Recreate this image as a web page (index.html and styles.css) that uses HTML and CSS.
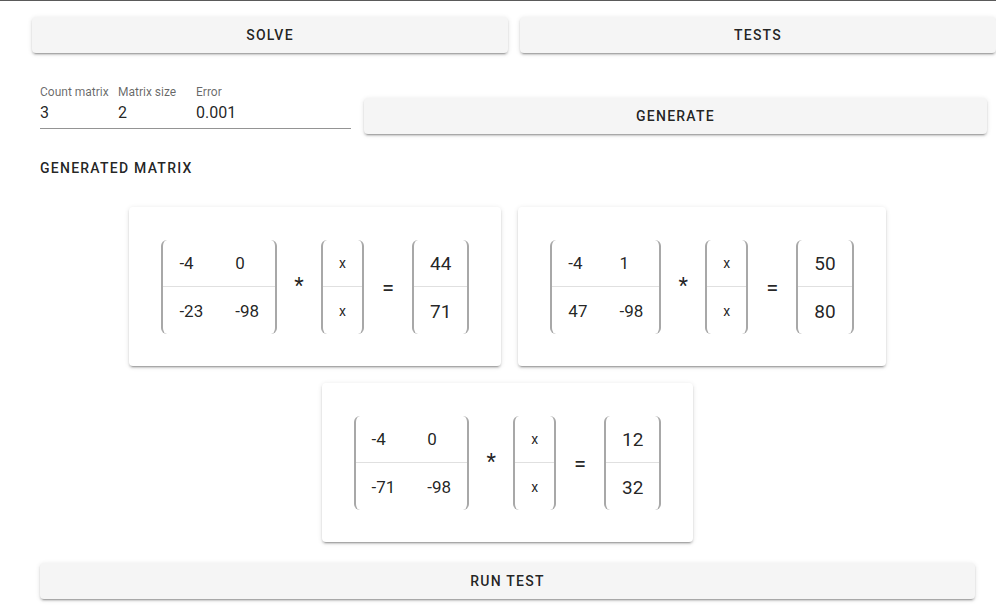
FILE: index.html
```html
<!DOCTYPE html>
<html>
<head>
<meta charset="utf-8">
<link rel="stylesheet" href="styles.css">
</head>
<body>
<div class="app">
  <div class="top-actions">
    <button class="btn">SOLVE</button>
    <button class="btn">TESTS</button>
  </div>

  <div class="controls">
    <div class="fields">
      <div class="field f-count">
        <span class="f-label">Count matrix</span>
        <span class="f-value">3</span>
      </div>
      <div class="field f-size">
        <span class="f-label">Matrix size</span>
        <span class="f-value">2</span>
      </div>
      <div class="field f-error">
        <span class="f-label">Error</span>
        <span class="f-value">0.001</span>
      </div>
    </div>
    <button class="btn btn-generate">GENERATE</button>
  </div>

  <div class="section-title">GENERATED MATRIX</div>

  <div class="cards">
    <div class="card">
      <table class="mx">
        <tr><td>-4</td><td>0</td></tr>
        <tr><td>-23</td><td>-98</td></tr>
      </table>
      <span class="op op-mul">*</span>
      <table class="mx vec">
        <tr><td>x</td></tr>
        <tr><td>x</td></tr>
      </table>
      <span class="op op-eq">=</span>
      <table class="mx res">
        <tr><td>44</td></tr>
        <tr><td>71</td></tr>
      </table>
    </div>

    <div class="card">
      <table class="mx">
        <tr><td>-4</td><td>1</td></tr>
        <tr><td>47</td><td>-98</td></tr>
      </table>
      <span class="op op-mul">*</span>
      <table class="mx vec">
        <tr><td>x</td></tr>
        <tr><td>x</td></tr>
      </table>
      <span class="op op-eq">=</span>
      <table class="mx res">
        <tr><td>50</td></tr>
        <tr><td>80</td></tr>
      </table>
    </div>

    <div class="card">
      <table class="mx">
        <tr><td>-4</td><td>0</td></tr>
        <tr><td>-71</td><td>-98</td></tr>
      </table>
      <span class="op op-mul">*</span>
      <table class="mx vec">
        <tr><td>x</td></tr>
        <tr><td>x</td></tr>
      </table>
      <span class="op op-eq">=</span>
      <table class="mx res">
        <tr><td>12</td></tr>
        <tr><td>32</td></tr>
      </table>
    </div>
  </div>

  <div class="bottom-actions">
    <button class="btn btn-run">RUN TEST</button>
  </div>
</div>
</body>
</html>
```

FILE: styles.css
```css
* {
  box-sizing: border-box;
}

html, body {
  margin: 0;
  padding: 0;
  background: #ffffff;
}

body {
  font-family: Roboto, "Liberation Sans", sans-serif;
  color: rgba(0, 0, 0, 0.87);
  border-top: 1px solid #5a5a5a;
  width: 996px;
  height: 609px;
  overflow: hidden;
}

.btn {
  display: flex;
  align-items: center;
  justify-content: center;
  height: 36px;
  padding: 0 16px;
  border: none;
  border-radius: 4px;
  background: #f5f5f5;
  color: rgba(0, 0, 0, 0.87);
  font-family: Roboto, "Liberation Sans", sans-serif;
  font-size: 14px;
  font-weight: 500;
  letter-spacing: 1.25px;
  box-shadow: 0 3px 1px -2px rgba(0, 0, 0, 0.2),
              0 2px 2px 0 rgba(0, 0, 0, 0.14),
              0 1px 5px 0 rgba(0, 0, 0, 0.12);
}

.top-actions {
  display: grid;
  grid-template-columns: 476px 476px;
  column-gap: 12px;
  padding: 16px 0 0 32px;
}

.controls {
  display: flex;
  align-items: flex-start;
  margin-top: 31px;
  padding-left: 40px;
}

.fields {
  display: flex;
  width: 311px;
  padding-bottom: 3px;
  border-bottom: 1px solid rgba(0, 0, 0, 0.42);
}

.field {
  display: flex;
  flex-direction: column;
}

.f-count { width: 78px; }
.f-size { width: 78px; }
.f-error { flex: 1; }

.f-label {
  font-size: 12px;
  line-height: 16px;
  color: rgba(0, 0, 0, 0.6);
  white-space: nowrap;
}

.f-value {
  font-size: 16px;
  line-height: 24px;
  margin-top: 1px;
  color: rgba(0, 0, 0, 0.87);
}

.btn-generate {
  width: 623px;
  margin: 14px 0 0 13px;
}

.section-title {
  margin: 24px 0 0 40px;
  font-size: 14px;
  line-height: 20px;
  font-weight: 500;
  letter-spacing: 1.25px;
  color: rgba(0, 0, 0, 0.87);
}

.cards {
  display: flex;
  flex-wrap: wrap;
  justify-content: center;
  gap: 17px;
  width: 935px;
  margin: 29px 0 0 40px;
}

.card {
  display: flex;
  align-items: center;
  background: #ffffff;
  border-radius: 4px;
  padding: 33px 32px 32px 32px;
  box-shadow: 0 3px 1px -2px rgba(0, 0, 0, 0.2),
              0 2px 2px 0 rgba(0, 0, 0, 0.14),
              0 1px 5px 0 rgba(0, 0, 0, 0.12);
}

.mx {
  border-collapse: separate;
  border-spacing: 0;
  border-left: 2px solid #a8a8a8;
  border-right: 2px solid #a8a8a8;
  border-radius: 6px;
  height: 94px;
}

.mx td {
  padding: 0 16px;
  height: 47px;
  font-size: 17px;
  color: rgba(0, 0, 0, 0.87);
  text-align: left;
  white-space: nowrap;
}

.mx tr:first-child td {
  height: 47px;
  border-bottom: 1px solid #e0e0e0;
  padding-top: 0;
}

.mx tr:last-child td {
  height: 47px;
  padding-top: 1px;
}

.vec td {
  font-size: 14px;
  padding: 0 16px;
}

.res td {
  font-size: 19px;
}

.op {
  font-size: 22px;
  text-align: center;
  color: rgba(0, 0, 0, 0.87);
}

.op-mul {
  width: 44px;
  margin-top: -4px;
}

.op-eq {
  width: 48px;
}

.bottom-actions {
  margin: 21px 0 0 40px;
}

.btn-run {
  width: 935px;
}
```
